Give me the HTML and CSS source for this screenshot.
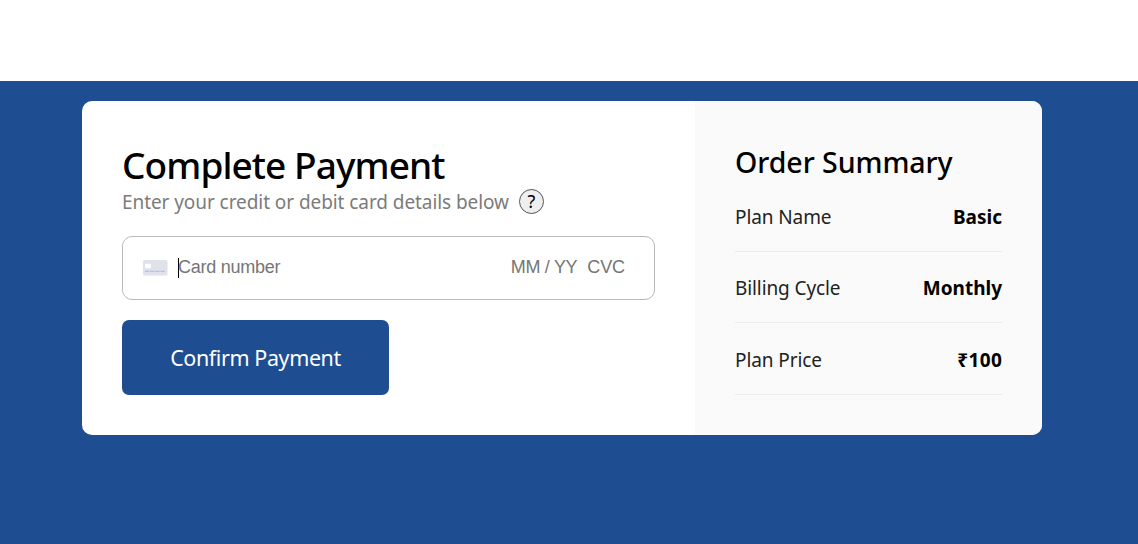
FILE: index.html
```html
<!DOCTYPE html>
<html lang="en">
<head>
<meta charset="utf-8">
<title>Complete Payment</title>
<link rel="stylesheet" href="styles.css">
</head>
<body>
<main class="page">
  <div class="checkout">
    <section class="payment">
      <h1 class="payment-title">Complete Payment</h1>
      <div class="hint">
        <span class="hint-text">Enter your credit or debit card details below</span>
        <button class="help" type="button">?</button>
      </div>
      <div class="card-field">
        <svg class="card-icon" width="26" height="16" viewBox="0 0 26 16">
          <rect x="1" y="0" width="24.5" height="15.5" rx="1.5" fill="#dfe1eb"/>
          <rect x="3" y="3.7" width="6" height="4.6" rx="1" fill="#fff"/>
          <path d="M3 11.3h20" stroke="#b9bfd3" stroke-width="1.3" stroke-dasharray="4.2 1"/>
        </svg>
        <span class="caret"></span>
        <span class="number">Card number</span>
        <span class="expiry">MM / YY</span>
        <span class="cvc">CVC</span>
      </div>
      <button class="confirm" type="button">Confirm Payment</button>
    </section>
    <aside class="summary">
      <h2 class="summary-title">Order Summary</h2>
      <div class="row"><span class="label">Plan Name</span><strong class="value">Basic</strong></div>
      <div class="row"><span class="label">Billing Cycle</span><strong class="value">Monthly</strong></div>
      <div class="row"><span class="label">Plan Price</span><strong class="value price">₹100</strong></div>
    </aside>
  </div>
</main>
</body>
</html>
```
FILE: styles.css
```css
* { box-sizing: border-box; }
body {
  margin: 0;
  padding-top: 81px;
  background: #fff;
  font-family: "Noto Sans", "Open Sans", sans-serif;
  color: #000;
  overflow: hidden;
}
.page {
  height: 463px;
  padding: 20px 0 0 82px;
  background: #1e4d91;
}
.checkout {
  display: flex;
  width: 960px;
  height: 334px;
  border-radius: 10px;
  overflow: hidden;
  background: #fff;
}
.payment { width: 613px; padding: 40px; }
.payment-title {
  margin: 0;
  height: 48px;
  font-size: 37px;
  line-height: 48px;
  font-weight: 500;
  letter-spacing: -0.92px;
  white-space: nowrap;
}
.hint { display: flex; align-items: center; height: 25px; color: #7b7b7b; }
.hint-text {
  width: 387px;
  font-size: 19px;
  line-height: 25px;
  padding-top: 1px;
  letter-spacing: -0.07px;
  white-space: nowrap;
}
.help {
  width: 25px;
  height: 25px;
  margin-left: 10px;
  padding: 0;
  border: 1px solid #555;
  border-radius: 50%;
  background: #efefef;
  font: 18px/23px "Noto Sans", sans-serif;
  color: #000;
}
.card-field {
  display: flex;
  align-items: center;
  width: 533px;
  height: 64px;
  margin-top: 22px;
  padding: 0 29px 2px 19px;
  border: 1px solid #b8b8b8;
  border-radius: 10px;
  font: 18px "Liberation Sans", sans-serif;
  color: #757575;
}
.card-icon { margin-top: 2px; }
.caret { width: 1px; height: 20px; margin: 2px -1px 0 10px; background: #000; }
.number { letter-spacing: -0.25px; }
.expiry { margin-left: auto; letter-spacing: -0.32px; }
.cvc { margin-left: 10px; letter-spacing: -0.1px; }
.confirm {
  display: block;
  width: 267px;
  height: 75px;
  margin-top: 20px;
  padding: 0;
  border: 0;
  border-radius: 7px;
  background: #1e4d91;
  color: #fff;
  font: 21.5px/29px "Noto Sans", sans-serif;
  letter-spacing: -0.4px;
}
.summary { width: 347px; padding: 40px; background: #fafafa; }
.summary-title {
  margin: 0 0 13px;
  font-size: 28.5px;
  line-height: 43px;
  font-weight: 500;
  letter-spacing: -0.05px;
  white-space: nowrap;
}
.row {
  display: flex;
  justify-content: space-between;
  align-items: flex-start;
  height: 72px;
  padding-top: 24px;
  border-bottom: 1px solid #ebebeb;
  font-size: 19px;
  line-height: 27px;
}
.row:first-of-type { height: 55px; padding-top: 7px; }
.row:nth-of-type(2) { height: 71px; padding-top: 23px; }
.label { color: #222; letter-spacing: -0.1px; }
.value { font-weight: 700; }
.price { letter-spacing: 0.4px; margin-right: -0.4px; }
```
